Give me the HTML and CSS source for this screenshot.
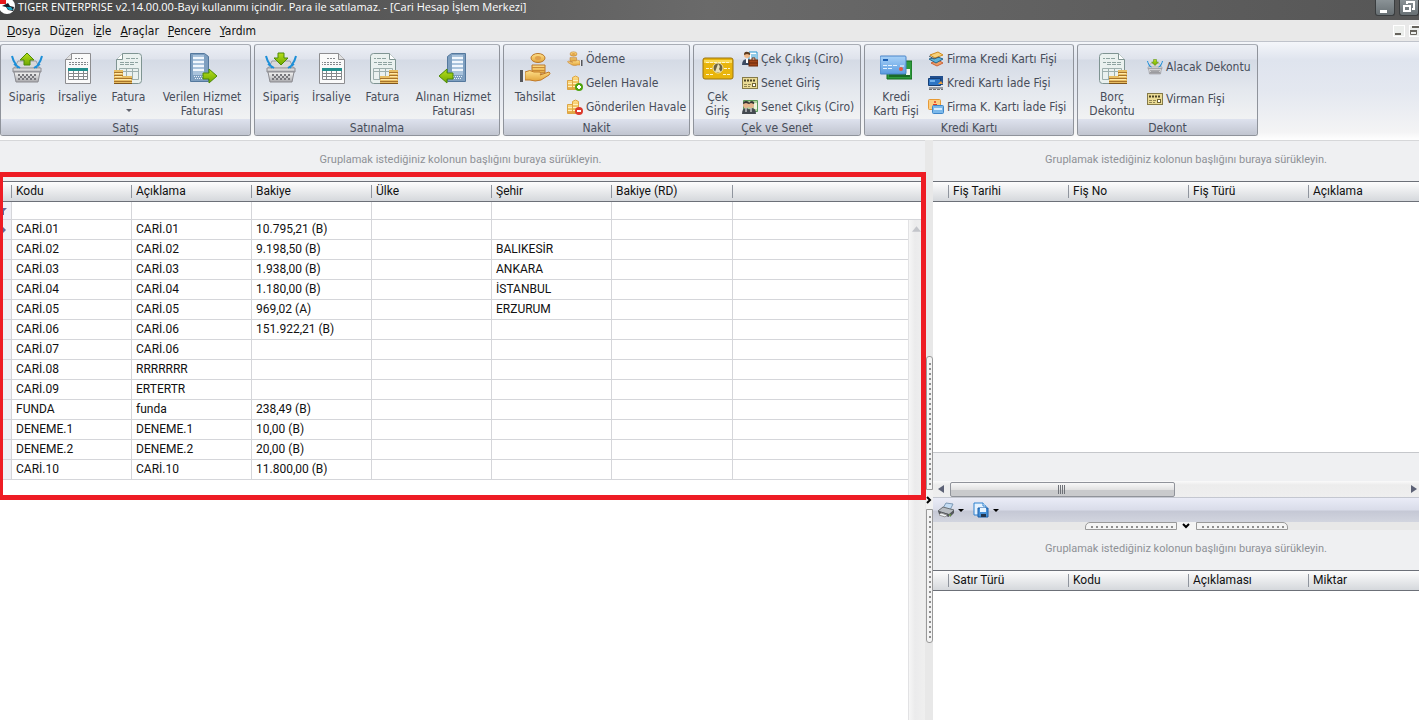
FILE: index.html
```
<!DOCTYPE html>
<html lang="tr">
<head>
<meta charset="utf-8">
<title>TIGER ENTERPRISE</title>
<link rel="stylesheet" href="styles.css">
</head>
<body>
<svg class="sprite" aria-hidden="true">
  <defs>
    <linearGradient id="green" x1="0" y1="0" x2="0" y2="1"><stop offset="0" stop-color="#b9e01c"/><stop offset="1" stop-color="#6fa800"/></linearGradient>
    <linearGradient id="gold" x1="0" y1="0" x2="0" y2="1"><stop offset="0" stop-color="#ffe08a"/><stop offset="1" stop-color="#e2a53c"/></linearGradient>
    <linearGradient id="steel" x1="0" y1="0" x2="0" y2="1"><stop offset="0" stop-color="#f4f4f4"/><stop offset="1" stop-color="#a9a9ad"/></linearGradient>
    <linearGradient id="blue" x1="0" y1="0" x2="0" y2="1"><stop offset="0" stop-color="#a9d2f8"/><stop offset="1" stop-color="#5a9be0"/></linearGradient>
    <symbol id="basket" viewBox="0 0 32 32">
      <path d="M7 9h18l4 8H3z" fill="#d8d8da" stroke="#9c9ca0"/>
      <path d="M2 16h28v4H2z" fill="url(#steel)" stroke="#8b8b90"/>
      <path d="M3 20h26l-2 10H5z" fill="url(#steel)" stroke="#8b8b90"/>
      <path d="M7 23h18M7 27h18" stroke="#77777c" stroke-width="2" stroke-dasharray="2 2"/><path d="M9 25h16" stroke="#77777c" stroke-width="2" stroke-dasharray="2 2"/>
      <path d="M1 4c1 5 3 7 6 12M3 12l6 4M31 4c-1 5-3 7-6 12M29 12l-6 4" fill="none" stroke="#1d8fd8" stroke-width="2"/>
    </symbol>
    <symbol id="basket-up" viewBox="0 0 32 32"><use href="#basket"/><path d="M16 1l7 7h-4v5h-6V8H9z" fill="url(#green)" stroke="#4d8a08"/></symbol>
    <symbol id="basket-down" viewBox="0 0 32 32"><use href="#basket"/><path d="M16 13L9 6h4V1h6v5h4z" fill="url(#green)" stroke="#4d8a08"/></symbol>
    <symbol id="sheet" viewBox="0 0 32 32">
      <path d="M3.500 31.500V7.500l6-6h19v30z" fill="#fafafa" stroke="#8d8d90"/>
      <path d="M3.500 7.500h6v-6" fill="#e2e2e2" stroke="#8d8d90"/>
      <path d="M13 6.500h9M7 10.500h19M7 12.500h19" stroke="#85888c" stroke-dasharray="2 1"/>
      <path d="M6.500 17.500h19v10h-19zM6 21.500h20M6 24.500h20M11.500 17v10M16.500 17v10M21.500 17v10" fill="#fff" stroke="#85898c"/>
      <path d="M6 16h20v3H6z" fill="#238f8d"/>
    </symbol>
    <symbol id="invoice-sheet" viewBox="0 0 32 32">
      <path d="M3.500 31.500V7.500l6-6h16q3 0 3 3v24q0 3-3 3z" fill="#eaf1ef" stroke="#7f9492"/>
      <path d="M3.500 7.500h6v-6" fill="#fff" stroke="#7f9492"/>
      <path d="M13 6.500h12M7 10.500h18M7 12.500h15" stroke="#8ea3a0" stroke-dasharray="4 1"/>
      <path d="M6.500 16.500h19v11h-19zM6 19.500h19M13.500 17v11M19.500 17v11" fill="none" stroke="#9dafad"/>
    </symbol>
    <symbol id="coins" viewBox="0 0 18 14">
      <path d="M0 0h9v14H0zM9 6h9v8H9z" fill="#e7bd62"/>
      <path d="M0 2.500h9M0 5.500h9M0 8.500h18M0 11.500h18" stroke="#a8742a"/>
      <path d="M1 3.500h7M1 6.500h7M1 9.500h16" stroke="#ffe9a9"/>
      <path d="M0 13.500h18" stroke="#80561c"/>
    </symbol>
    <symbol id="invoice" viewBox="0 0 32 32"><use href="#invoice-sheet"/><use href="#coins" x="1" y="18" width="18" height="14"/></symbol>
    <symbol id="invoice-in" viewBox="0 0 32 32"><g transform="matrix(-1 0 0 1 32 0)"><use href="#invoice"/></g></symbol>
    <symbol id="server" viewBox="0 0 32 32">
      <path d="M4.500 1.500h14l4 3v25h-18z" fill="#7e9fc0" stroke="#54789d"/>
      <path d="M7 3h11v20H7z" fill="#a9c3dc"/>
      <path d="M7 6h11M7 10h11M7 14h11M7 18h11" stroke="#f1f7fd" stroke-width="2"/>
      <path d="M8 24.500h10M9 26.500h10" stroke="#e9f1f8" stroke-dasharray="1 1"/>
      <path d="M17 21h6v-4l8 7-8 7v-4h-6z" fill="url(#green)" stroke="#4d8a08"/>
    </symbol>
    <symbol id="server-in" viewBox="0 0 32 32"><g transform="matrix(-1 0 0 1 32 0)"><use href="#server"/></g></symbol>
    <symbol id="hand" viewBox="0 0 32 32">
      <path d="M13 13h13v8H13z" fill="url(#gold)" stroke="#b9772a"/><path d="M13 15.500h13M13 18.500h13" stroke="#c98a35"/>
      <ellipse cx="19" cy="6" rx="7" ry="4.500" fill="url(#gold)" stroke="#b9772a"/><ellipse cx="19" cy="6" rx="3" ry="2" fill="#e0a04c"/>
      <path d="M6 20q5-3 9 0h6q2 2 0 3l9-3q2 1 0 3l-8 5q-6 2-11 0H6z" fill="url(#gold)" stroke="#c07a2b"/>
      <path d="M1 18h3v12H1z" fill="#55565b"/><path d="M4 18h2v12H4z" fill="#e8e8ea"/>
    </symbol>
    <symbol id="pay" viewBox="0 0 32 32"><g transform="matrix(-1 0 0 1 32 0)"><use href="#hand"/></g></symbol>
    <symbol id="stack" viewBox="0 0 16 16">
      <path d="M.5 5.500h5v9h-5z" fill="url(#gold)" stroke="#dca545"/><path d="M5.500 2.500q3-3 6 0v12h-6z" fill="url(#gold)" stroke="#dca545"/>
      <path d="M1 8.500h4M1 11.500h4M6 5.500h5M6 8.500h5M6 11.500h5" stroke="#fff1bd"/>
    </symbol>
    <symbol id="stack-plus" viewBox="0 0 16 16"><use href="#stack"/><circle cx="12" cy="12" r="4" fill="#4ea20e"/><path d="M10 12h4M12 10v4" stroke="#fff" stroke-width="2"/></symbol>
    <symbol id="stack-minus" viewBox="0 0 16 16"><use href="#stack"/><circle cx="12" cy="12" r="4" fill="#dc3a2c"/><path d="M10 12h4" stroke="#fff" stroke-width="2"/></symbol>
    <symbol id="cheque" viewBox="0 0 32 32">
      <rect x="1" y="6" width="30" height="21" rx="2" fill="#e9b50c" stroke="#9a7410"/>
      <path d="M2 8h28v3H2z" fill="#f9da58"/><path d="M4 10.500h24M4 16.500h6M22 16.500h6M4 22.500h7M21 22.500h7" stroke="#fff6cc" stroke-dasharray="3 1"/>
      <circle cx="16" cy="16" r="5" fill="#6e6440" stroke="#f7e6a2"/><path d="M16 12q3 2 1 5l2 3h-6z" fill="#e8dfb8"/>
    </symbol>
    <symbol id="person-case" viewBox="0 0 16 16">
      <path d="M7 1h8v13H7z" fill="#fff" stroke="#2596d1"/><path d="M9 4h5M9 6h5" stroke="#2596d1"/>
      <circle cx="5" cy="4" r="3" fill="#efb98a"/><path d="M2 4q0-4 4-3 3 1 2 3l-3-1z" fill="#5b3a20"/>
      <path d="M0 14q0-6 5-6t5 6z" fill="#3c4b63"/><path d="M4 8h2v4H4z" fill="#fff"/>
      <rect x="7" y="9" width="9" height="6" fill="#a24518" stroke="#69290b"/><path d="M10 9V7h3v2M7 12h9" fill="none" stroke="#69290b"/>
    </symbol>
    <symbol id="credit" viewBox="0 0 16 16">
      <rect x=".5" y="2.500" width="15" height="11" fill="#eadb95" stroke="#857a48"/><path d="M2 5.500h12" stroke="#4b4324" stroke-width="2" stroke-dasharray="2 1"/>
      <path d="M2 9.500h7M2 11.500h6" stroke="#8f8454" stroke-dasharray="3 1"/><rect x="10.500" y="8.500" width="3" height="3" fill="#fff" stroke="#6f6434"/>
    </symbol>
    <symbol id="people" viewBox="0 0 16 16">
      <path d="M1.500 1.500h14v11h-14z" fill="#b4d5a1" stroke="#5b9a5c"/><path d="M12 4h3v6h-3z" fill="#f0f4dc"/>
      <circle cx="4" cy="6" r="3" fill="#e5b48d"/><circle cx="9" cy="6" r="3" fill="#e5b48d"/><path d="M1 5q0-3 3-3t3 2q1-2 3-2 3 1 2 3L9 4 7 5 4 4z" fill="#333"/>
      <path d="M0 15q0-6 4-6t5 6zM6 15q0-6 4-6t4 6z" fill="#454a50"/><path d="M4 9v4M9 9v4" stroke="#fff"/>
    </symbol>
    <symbol id="cards" viewBox="0 0 32 32">
      <path d="M7 9h25v18H7z" fill="#2e9a3c" stroke="#14691f"/><path d="M9 22h21v3H9z" fill="#1b6a28"/><path d="M26 17h4v6h-4z" fill="#f4f7f0"/>
      <rect x="0" y="4" width="26" height="18" rx="1" fill="url(#blue)" stroke="#4a84c8"/><path d="M3 8h5" stroke="#185cb0" stroke-width="2"/>
      <path d="M3 13.500h14M3 16.500h10" stroke="#e4f2ff" stroke-dasharray="4 1"/><circle cx="21" cy="17" r="2" fill="#e65a40"/><path d="M20 14h4" stroke="#fff"/>
    </symbol>
    <symbol id="card-stack" viewBox="0 0 16 16">
      <path d="M3 12l7-3 5 3-6 3z" fill="#ee9d64" stroke="#c9633a"/><path d="M1 8l9-2 5 2-7 4z" fill="#5fb4da" stroke="#26668c"/><path d="M2 4l8-3 5 3-8 3z" fill="#f8d27a" stroke="#cf8b1f"/><path d="M1 5l5 3 5-2" fill="none" stroke="#4a5a66"/>
    </symbol>
    <symbol id="card-blue" viewBox="0 0 16 16">
      <path d="M2 1h13v9H2z" fill="#224f8e"/><path d="M.5 3.500h12v7H.5z" fill="#2d75c4" stroke="#173f76"/><path d="M2 6h5" stroke="#74b2ec" stroke-width="2"/><path d="M10 9l3-3 2 3z" fill="#e79f3f"/><path d="M1 13h14" stroke="#9a9da2" stroke-width="2"/><path d="M1 14.500h14" stroke="#6d7075" stroke-dasharray="3 1"/>
    </symbol>
    <symbol id="card-mix" viewBox="0 0 16 16">
      <rect x=".5" y=".5" width="12" height="10" rx="1" fill="#fbcf85" stroke="#e79a36"/><circle cx="7" cy="3" r="1" fill="#e33b26"/><path d="M5 5.500h4" stroke="#e33b26"/>
      <rect x="4.500" y="6.500" width="11" height="8" rx="1" fill="#7bb8ea" stroke="#3f86c9"/><path d="M6 10h8" stroke="#d8ecff" stroke-width="2"/>
    </symbol>
  </defs>
</svg>

<header class="titlebar">
  <svg class="logo" viewBox="0 0 16 16" aria-hidden="true"><circle cx="7" cy="6" r="8" fill="#fff"/><path d="M0 0h6v4H0z" fill="#e8181c"/><path d="M4 5l4-2 2 3 4 1-1 4-5-1-2-3-4-1z" fill="#16202a"/><path d="M6 7h5l2 3H9z" fill="#1aa1c0"/></svg>
  <h1 class="title">TIGER ENTERPRISE v2.14.00.00-Bayi kullanımı içindir. Para ile satılamaz. - [Cari Hesap İşlem Merkezi]</h1>
  <div class="window-buttons">
    <button class="win" aria-label="Küçült"><svg viewBox="0 0 18 15"><path d="M4 10h7v3H4z" fill="#fff"/></svg></button>
    <button class="win" aria-label="Geri yükle"><svg viewBox="0 0 18 15"><path d="M7 4V2h7v7h-2" fill="none" stroke="#fff" stroke-width="2"/><path d="M4 6h6v5H4z" fill="none" stroke="#fff" stroke-width="2"/></svg></button>
  </div>
</header>

<nav class="menubar">
  <a href="#"><u>D</u>osya</a><a href="#">Dü<u>z</u>en</a><a href="#">İ<u>z</u>le</a><a href="#"><u>A</u>raçlar</a><a href="#"><u>P</u>encere</a><a href="#"><u>Y</u>ardım</a>
  <div class="mdi-buttons">
    <button class="mdi" aria-label="Pencereyi küçült"><svg viewBox="0 0 10 10"><path d="M1 7h6v2H1z" fill="#66635c"/></svg></button>
    <button class="mdi" aria-label="Pencereyi geri yükle"><svg viewBox="0 0 10 10"><path d="M2 1h8" stroke="#66635c" stroke-width="2"/><path d="M.5 4.500h6v4h-6z" fill="none" stroke="#66635c"/><path d="M0 5h7" stroke="#66635c" stroke-width="2"/></svg></button>
  </div>
</nav>

<div class="ribbon">
  <section class="group">
    <div class="group-body">
      <button class="big"><svg class="icon"><use href="#basket-up"/></svg>Sipariş</button>
      <button class="big"><svg class="icon"><use href="#sheet"/></svg>İrsaliye</button>
      <button class="big"><svg class="icon"><use href="#invoice"/></svg>Fatura<span class="drop"></span></button>
      <button class="big wide"><svg class="icon"><use href="#server"/></svg>Verilen Hizmet<br>Faturası</button>
    </div>
    <h2 class="caption">Satış</h2>
  </section>
  <section class="group">
    <div class="group-body">
      <button class="big"><svg class="icon"><use href="#basket-down"/></svg>Sipariş</button>
      <button class="big"><svg class="icon mirror"><use href="#sheet"/></svg>İrsaliye</button>
      <button class="big"><svg class="icon"><use href="#invoice-in"/></svg>Fatura</button>
      <button class="big wide"><svg class="icon"><use href="#server-in"/></svg>Alınan Hizmet<br>Faturası</button>
    </div>
    <h2 class="caption">Satınalma</h2>
  </section>
  <section class="group">
    <div class="group-body">
      <button class="big medium"><svg class="icon"><use href="#hand"/></svg>Tahsilat</button>
      <div class="list">
        <button class="small"><svg class="mini"><use href="#pay"/></svg>Ödeme</button>
        <button class="small"><svg class="mini"><use href="#stack-plus"/></svg>Gelen Havale</button>
        <button class="small"><svg class="mini"><use href="#stack-minus"/></svg>Gönderilen Havale</button>
      </div>
    </div>
    <h2 class="caption">Nakit</h2>
  </section>
  <section class="group">
    <div class="group-body">
      <button class="big narrow"><svg class="icon"><use href="#cheque"/></svg>Çek<br>Giriş</button>
      <div class="list">
        <button class="small"><svg class="mini"><use href="#person-case"/></svg>Çek Çıkış (Ciro)</button>
        <button class="small"><svg class="mini"><use href="#credit"/></svg>Senet Giriş</button>
        <button class="small"><svg class="mini"><use href="#people"/></svg>Senet Çıkış (Ciro)</button>
      </div>
    </div>
    <h2 class="caption">Çek ve Senet</h2>
  </section>
  <section class="group">
    <div class="group-body">
      <button class="big medium"><svg class="icon"><use href="#cards"/></svg>Kredi<br>Kartı Fişi</button>
      <div class="list">
        <button class="small"><svg class="mini"><use href="#card-stack"/></svg>Firma Kredi Kartı Fişi</button>
        <button class="small"><svg class="mini"><use href="#card-blue"/></svg>Kredi Kartı İade Fişi</button>
        <button class="small"><svg class="mini"><use href="#card-mix"/></svg>Firma K. Kartı İade Fişi</button>
      </div>
    </div>
    <h2 class="caption">Kredi Kartı</h2>
  </section>
  <section class="group">
    <div class="group-body">
      <button class="big roomy"><svg class="icon"><use href="#invoice-in"/></svg>Borç<br>Dekontu</button>
      <div class="list loose">
        <button class="small"><svg class="mini"><use href="#basket-down"/></svg>Alacak Dekontu</button>
        <button class="small"><svg class="mini"><use href="#credit"/></svg>Virman Fişi</button>
      </div>
    </div>
    <h2 class="caption">Dekont</h2>
  </section>
</div>

<main class="workspace">
  <section class="accounts">
    <p class="group-hint">Gruplamak istediğiniz kolonun başlığını buraya sürükleyin.</p>
    <div class="grid-area">
      <table class="grid">
        <colgroup><col class="c-mark"><col class="c"><col class="c"><col class="c"><col class="c"><col class="c"><col class="c-last"><col></colgroup>
        <thead><tr><th></th><th>Kodu</th><th>Açıklama</th><th>Bakiye</th><th>Ülke</th><th>Şehir</th><th>Bakiye (RD)</th><th></th></tr></thead>
        <tbody>
          <tr class="filter"><td><svg class="mark" viewBox="0 0 7 10"><path d="M0 2h7L4 5v4H2V5z" fill="#63679a"/></svg></td><td></td><td></td><td></td><td></td><td></td><td></td><td></td></tr>
          <tr><td><svg class="mark" viewBox="0 0 7 10"><path d="M2 1l4 4-4 4z" fill="#63679a"/></svg></td><td>CARİ.01</td><td>CARİ.01</td><td>10.795,21 (B)</td><td></td><td></td><td></td><td></td></tr>
          <tr><td></td><td>CARİ.02</td><td>CARİ.02</td><td>9.198,50 (B)</td><td></td><td>BALIKESİR</td><td></td><td></td></tr>
          <tr><td></td><td>CARİ.03</td><td>CARİ.03</td><td>1.938,00 (B)</td><td></td><td>ANKARA</td><td></td><td></td></tr>
          <tr><td></td><td>CARİ.04</td><td>CARİ.04</td><td>1.180,00 (B)</td><td></td><td>İSTANBUL</td><td></td><td></td></tr>
          <tr><td></td><td>CARİ.05</td><td>CARİ.05</td><td>969,02 (A)</td><td></td><td>ERZURUM</td><td></td><td></td></tr>
          <tr><td></td><td>CARİ.06</td><td>CARİ.06</td><td>151.922,21 (B)</td><td></td><td></td><td></td><td></td></tr>
          <tr><td></td><td>CARİ.07</td><td>CARİ.06</td><td></td><td></td><td></td><td></td><td></td></tr>
          <tr><td></td><td>CARİ.08</td><td>RRRRRRR</td><td></td><td></td><td></td><td></td><td></td></tr>
          <tr><td></td><td>CARİ.09</td><td>ERTERTR</td><td></td><td></td><td></td><td></td><td></td></tr>
          <tr><td></td><td>FUNDA</td><td>funda</td><td>238,49 (B)</td><td></td><td></td><td></td><td></td></tr>
          <tr><td></td><td>DENEME.1</td><td>DENEME.1</td><td>10,00 (B)</td><td></td><td></td><td></td><td></td></tr>
          <tr><td></td><td>DENEME.2</td><td>DENEME.2</td><td>20,00 (B)</td><td></td><td></td><td></td><td></td></tr>
          <tr><td></td><td>CARİ.10</td><td>CARİ.10</td><td>11.800,00 (B)</td><td></td><td></td><td></td><td></td></tr>
        </tbody>
      </table>
      <div class="vscroll"><svg viewBox="0 0 10 6"><path d="M5 0l5 6H0z" fill="#c3c5ca"/></svg></div>
    </div>
    <div class="highlight"></div>
  </section>

  <div class="splitter">
    <div class="v-handle">
      <span class="dots"></span>
      <button class="collapse" aria-label="Paneli daralt"><svg viewBox="0 0 6 8"><path d="M1 1l3 3-3 3" fill="none" stroke="#000" stroke-width="2"/></svg></button>
      <span class="dots end"></span>
    </div>
  </div>

  <section class="details">
    <p class="group-hint right">Gruplamak istediğiniz kolonun başlığını buraya sürükleyin.</p>
    <table class="grid">
      <colgroup><col class="c-side"><col class="c"><col class="c"><col class="c"><col></colgroup>
      <thead><tr><th></th><th>Fiş Tarihi</th><th>Fiş No</th><th>Fiş Türü</th><th>Açıklama</th></tr></thead>
    </table>
    <div class="rows"></div>
    <div class="summary"></div>
    <div class="hscroll">
      <button class="arrow" aria-label="Sola kaydır"><svg viewBox="0 0 6 8"><path d="M6 0v8L0 4z" fill="#5c6175"/></svg></button>
      <div class="track"><div class="thumb"><svg viewBox="0 0 8 9"><path d="M.5 0v9M2.500 0v9M4.500 0v9M6.500 0v9" stroke="#6f7278"/></svg></div></div>
      <button class="arrow" aria-label="Sağa kaydır"><svg viewBox="0 0 6 8"><path d="M0 0v8l6-4z" fill="#5c6175"/></svg></button>
    </div>
    <div class="toolbar">
      <button class="tool" aria-label="Yazdır"><svg class="mini" viewBox="0 0 16 16"><path d="M5 6l3-5 7 1-3 6z" fill="#c4dcf3" stroke="#7d99b5"/><path d="M0 9l5-4 11 3-4 5z" fill="#b9bdc2" stroke="#6a6e73"/><path d="M0 9l11 3v3L1 12zM11 12l5-4v3l-4 4z" fill="#55585d"/><path d="M3 11l6 2-2 2-6-2z" fill="#eef2f4" stroke="#999"/><path d="M11 13h2" stroke="#6fbe2e"/></svg><span class="caret"></span></button>
      <button class="tool" aria-label="Kaydet"><svg class="mini" viewBox="0 0 16 16"><path d="M1 1h9l3 3v9H1z" fill="#e5f2ff" stroke="#2f81cf"/><path d="M10 1v3h3" fill="#fff" stroke="#2f81cf"/><path d="M5 6h10v9H5z" fill="#4691d8" stroke="#1b5ea9"/><path d="M7 6h6v4H7z" fill="#e9f4ff"/><path d="M8 12h5v3H8z" fill="#22364f"/></svg><span class="caret"></span></button>
    </div>
    <div class="h-splitter">
      <span class="hdots"></span>
      <button class="collapse-down" aria-label="Alt paneli daralt"><svg viewBox="0 0 8 6"><path d="M1 1l3 3 3-3" fill="none" stroke="#000" stroke-width="2"/></svg></button>
      <span class="hdots end"></span>
    </div>
    <p class="group-hint right lower">Gruplamak istediğiniz kolonun başlığını buraya sürükleyin.</p>
    <table class="grid">
      <colgroup><col class="c-side"><col class="c"><col class="c"><col class="c"><col></colgroup>
      <thead><tr><th></th><th>Satır Türü</th><th>Kodu</th><th>Açıklaması</th><th>Miktar</th></tr></thead>
    </table>
  </section>
</main>
</body>
</html>
```

FILE: styles.css
```
* { box-sizing: border-box; }

body {
  margin: 0;
  height: 100vh;
  display: flex;
  flex-direction: column;
  overflow: hidden;
  background: #fff;
  font-family: "DejaVu Sans Condensed", "Noto Sans", sans-serif;
  font-size: 12px;
  color: #111;
}

button {
  border: 0;
  padding: 0;
  background: none;
  font: inherit;
  color: inherit;
}

svg { display: block; }
.sprite { position: absolute; width: 0; height: 0; }

.titlebar {
  display: flex;
  align-items: flex-start;
  height: 20px;
  flex: none;
  background: linear-gradient(90deg, #444, #6a6a6a 50%, #565656);
  color: #fff;
}
.logo { width: 16px; height: 16px; flex: none; }
.title {
  margin: 0;
  padding-left: 2px;
  font-family: "Open Sans", "Noto Sans", sans-serif;
  font-size: 11px;
  font-weight: normal;
  line-height: 14px;
  white-space: nowrap;
}
.window-buttons { display: flex; gap: 4px; margin-left: auto; }
.win {
  width: 20px;
  height: 16px;
  border: 1px solid #3a3d3f;
  border-top: 0;
  border-radius: 0 0 3px 3px;
  background: linear-gradient(#8a9296, #687074);
}
.win svg { width: 18px; height: 15px; }

.menubar {
  display: flex;
  align-items: center;
  gap: 9px;
  height: 21px;
  flex: none;
  padding-left: 7px;
  background: #e9e9e9;
  font-size: 12px;
  line-height: 18px;
}
.menubar a { color: #111; text-decoration: none; }
.mdi-buttons { display: flex; gap: 4px; margin-left: auto; }
.mdi {
  width: 12px;
  height: 12px;
  border: 1px solid #fff;
  background: #eceeec;
}
.mdi:last-child { width: 10px; border-right: 0; }
.mdi svg { width: 10px; height: 10px; }

.ribbon {
  display: grid;
  grid-template-columns: 251px 246px 187px 168px 210px 181px;
  gap: 3px;
  flex: none;
  height: 99px;
  padding: 2px 0 4px;
  border-top: 1px solid #bfc3cb;
  background: linear-gradient(#f4f6fa, #dfe4ee 18px, #e4e8f0 50px, #f4f4f5 90px, #fff);
}
.group {
  display: flex;
  flex-direction: column;
  border: 1px solid #8f939b;
  border-top-color: #a9adb5;
  border-radius: 3px;
  overflow: hidden;
  background: linear-gradient(#eceff5, #dfe3ec 14px, #d4dae5 15px, #e4e8ee 45px, #f1f2f3 74px);
  color: #474d5a;
}
.group-body { display: flex; flex: 1; padding-left: 1px; }
.caption {
  flex: none;
  margin: 0;
  height: 16px;
  background: linear-gradient(#dee2ee, #c1c5d0);
  font-size: 12px;
  font-weight: normal;
  line-height: 18px;
  text-align: center;
}
.big {
  position: relative;
  display: block;
  flex: none;
  width: 51px;
  padding-top: 7px;
  line-height: 14px;
  white-space: nowrap;
  align-self: flex-start;
}
.big:first-child { width: 50px; }
.big.wide { flex: 1; }
.big.medium { width: 60px; }
.big.narrow { width: 45px; }
.big.roomy { width: 66px; }
.icon { width: 32px; height: 32px; margin: 0 auto 6px; }
.icon.mirror { transform: scaleX(-1); }
.drop {
  position: absolute;
  left: 50%;
  top: 64px;
  margin-left: -3px;
  border: 3px solid transparent;
  border-top-color: #60636c;
}
.list {
  display: flex;
  flex-direction: column;
  justify-content: center;
  padding: 2px 0 0 2px;
}
.small {
  display: flex;
  align-items: center;
  gap: 3px;
  height: 24px;
  white-space: nowrap;
}
.loose .small { height: 32px; }
.mini { width: 16px; height: 16px; flex: none; }

.workspace {
  display: flex;
  flex: 1;
  min-height: 0;
  font-family: Roboto, "Liberation Sans", sans-serif;
  font-size: 12px;
}
.accounts {
  position: relative;
  display: flex;
  flex-direction: column;
  flex: 925;
  min-width: 0;
}
.details {
  display: flex;
  flex-direction: column;
  flex: 486;
  min-width: 0;
}
.group-hint {
  margin: 0;
  flex: none;
  height: 41px;
  padding-right: 4px;
  border-top: 1px solid #d6d7d9;
  background: #eff0f2;
  color: #8e9196;
  font-size: 11px;
  line-height: 37px;
  text-align: center;
}
.group-hint.right { padding: 0 0 0 20px; }
.group-hint.lower { height: 40px; border-top: 0; }

.grid-area { position: relative; flex: 1; }
.grid {
  width: 100%;
  flex: none;
  border-collapse: separate;
  border-spacing: 0;
  table-layout: fixed;
}
.c-mark { width: 12px; }
.c { width: 120px; }
.c-last { width: 121px; }
.c-side { width: 16px; }
.grid th {
  height: 21px;
  padding: 0 0 2px 4px;
  border-top: 1px solid #6c7078;
  border-bottom: 1px solid #6c7078;
  background: linear-gradient(#8f959e, #8f959e) right 3px / 1px 13px no-repeat, linear-gradient(#fdfdfd, #d5d8dc);
  font-weight: normal;
  line-height: 16px;
  text-align: left;
}
.grid th:last-child { background: linear-gradient(#fdfdfd, #d5d8dc); }
.grid td {
  height: 20px;
  padding: 0 0 2px 4px;
  border-right: 1px solid #d5d6da;
  border-bottom: 1px solid #d5d6da;
  line-height: 16px;
  white-space: nowrap;
}
.grid td:first-child { padding: 0; background: #eff0f5; }
.grid td:last-child { border-right: 0; }
.grid .filter td { height: 18px; }
.mark { width: 7px; height: 10px; }

.vscroll {
  position: absolute;
  top: 39px;
  right: 0;
  bottom: 0;
  width: 17px;
  padding: 6px 3px;
  border-left: 1px solid #e2e2e4;
  background: linear-gradient(90deg, #f6f6f6, #ebebec 6px, #efefef);
}
.vscroll svg { width: 9px; height: 6px; }
.highlight {
  position: absolute;
  top: 32px;
  left: -2px;
  right: -1px;
  height: 328px;
  border: 5px solid #ee1c24;
  z-index: 2;
}

.splitter { flex: none; width: 8px; background: #e8e8e8; }
.v-handle { display: flex; flex-direction: column; margin: 216px 0 0 1px; }
.dots {
  height: 134px;
  border: 1px solid #9a9a9a;
  border-radius: 3px 3px 0 0;
  background: repeating-linear-gradient(transparent 0 3px, #8e8e8e 3px 5px) 2px 3px / 2px 125px no-repeat #f4f4f4;
}
.dots.end { border-radius: 0 0 3px 3px; }
.collapse { height: 19px; background: #f1f1f1; }
.collapse svg { width: 6px; height: 8px; }

.rows { flex: none; height: 250px; }
.summary { flex: none; height: 29px; border-top: 1px solid #c5c7cb; background: #eff0f2; }
.hscroll {
  display: flex;
  align-items: center;
  flex: none;
  height: 16px;
  background: linear-gradient(#fafafa, #ececec 4px, #efefef);
}
.arrow { width: 17px; height: 16px; padding-left: 5px; flex: none; }
.arrow svg { width: 6px; height: 8px; }
.arrow:last-child { width: 10px; padding-left: 2px; }
.track { flex: 1; }
.thumb {
  display: flex;
  align-items: center;
  justify-content: center;
  width: 49%;
  height: 15px;
  border: 1px solid #90939a;
  border-radius: 2px;
  background: linear-gradient(#f8f8f8, #e2e2e2 50%, #c9cacc 55%, #c9cacc);
}
.thumb svg { width: 8px; height: 9px; }
.toolbar {
  display: flex;
  align-items: center;
  gap: 9px;
  flex: none;
  height: 25px;
  padding-left: 5px;
  border-top: 1px solid #c4c7d0;
  background: linear-gradient(#eaecf7, #d9dce9 12px, #c5c8d5 13px, #d2d5df);
}
.tool { display: flex; align-items: center; gap: 4px; }
.caret { border: 3px solid transparent; border-top-color: #000; border-bottom: 0; }

.h-splitter {
  display: flex;
  justify-content: center;
  flex: none;
  height: 8px;
  padding-left: 20px;
  background: #e8e8e8;
}
.hdots {
  width: 92px;
  height: 8px;
  border: 1px solid #9a9a9a;
  border-radius: 5px 0 0 0;
  background: repeating-linear-gradient(90deg, transparent 0 3px, #8e8e8e 3px 5px) 2px 3px / 85px 2px no-repeat #f4f4f4;
}
.hdots.end { border-radius: 0 5px 0 0; }
.collapse-down { width: 19px; background: #f4f4f4; }
.collapse-down svg { width: 8px; height: 6px; margin: 0 auto; }
```
